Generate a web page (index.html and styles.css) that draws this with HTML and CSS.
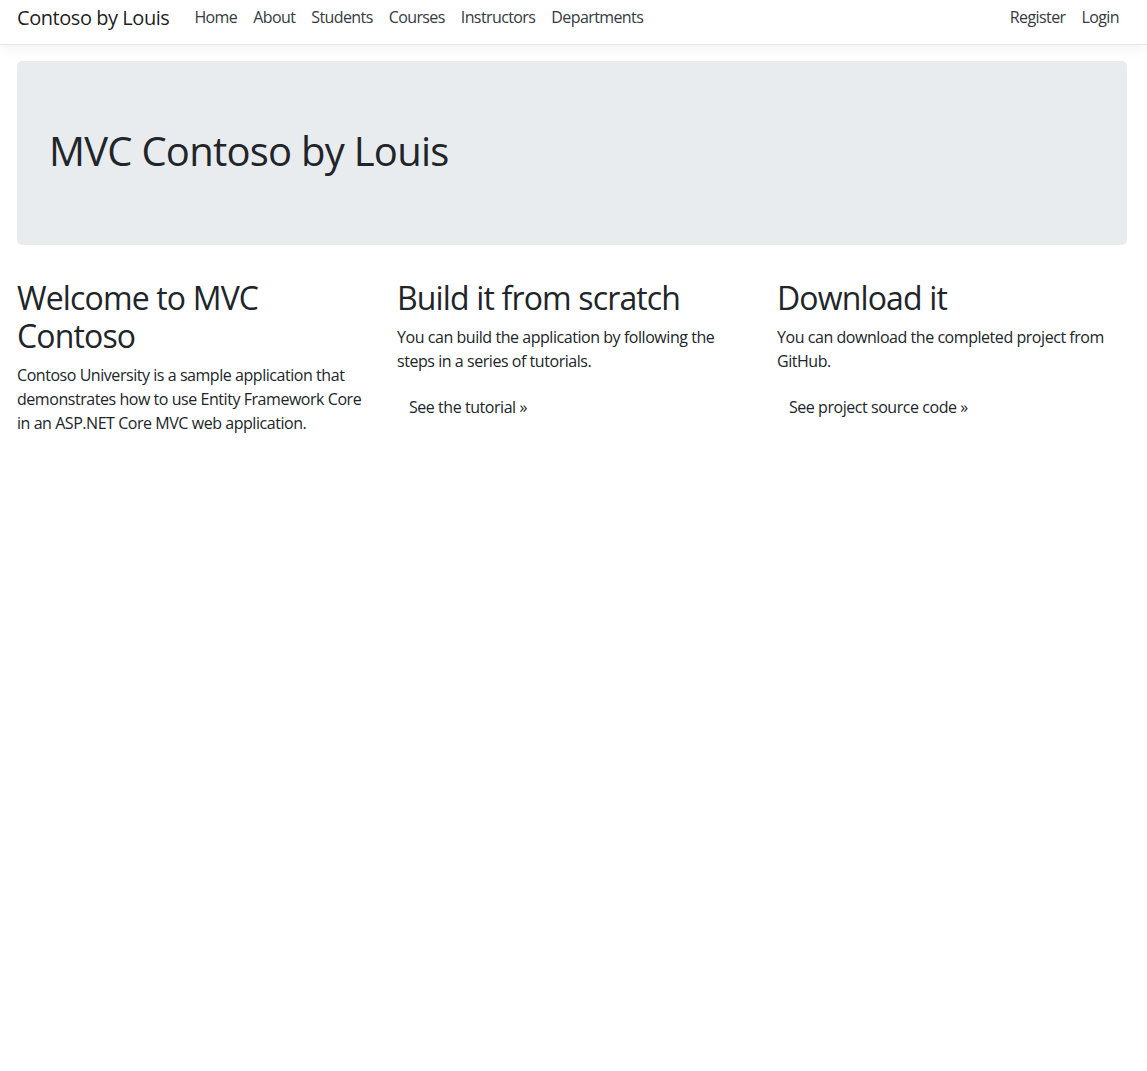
FILE: index.html
```html
<!DOCTYPE html>
<html lang="en">
<head>
<meta charset="utf-8">
<title>Home Page - Contoso by Louis</title>
<link rel="stylesheet" href="styles.css">
</head>
<body>
<header class="navbar">
  <a class="brand" href="#">Contoso by Louis</a>
  <nav class="nav-main">
    <a class="nav-link" href="#">Home</a>
    <a class="nav-link" href="#">About</a>
    <a class="nav-link" href="#">Students</a>
    <a class="nav-link" href="#">Courses</a>
    <a class="nav-link" href="#">Instructors</a>
    <a class="nav-link" href="#">Departments</a>
  </nav>
  <nav class="nav-user">
    <a class="nav-link" href="#">Register</a>
    <a class="nav-link" href="#">Login</a>
  </nav>
</header>
<main class="container">
  <div class="jumbotron">
    <h1>MVC Contoso by Louis</h1>
  </div>
  <div class="row">
    <div class="col">
      <h2>Welcome to MVC Contoso</h2>
      <p>Contoso University is a sample application that demonstrates how to use Entity Framework Core in an ASP.NET Core MVC web application.</p>
    </div>
    <div class="col">
      <h2>Build it from scratch</h2>
      <p>You can build the application by following the steps in a series of tutorials.</p>
      <p><a class="btn" href="#">See the tutorial &raquo;</a></p>
    </div>
    <div class="col">
      <h2>Download it</h2>
      <p>You can download the completed project from GitHub.</p>
      <p><a class="btn" href="#">See project source code &raquo;</a></p>
    </div>
  </div>
</main>
</body>
</html>
```
FILE: styles.css
```css
* { box-sizing: border-box; }
html, body { margin: 0; padding: 0; }
body {
  font-family: "Open Sans", "Noto Sans", sans-serif;
  font-size: 16px;
  line-height: 24px;
  letter-spacing: -0.45px;
  color: #212529;
  background: #fff;
}
a { text-decoration: none; }
.navbar {
  display: flex;
  align-items: flex-start;
  height: 45px;
  padding: 5px 20px 0 17px;
  border-bottom: 1px solid #e5e5e5;
  box-shadow: 0 4px 12px rgba(0,0,0,.05);
  background: #fff;
}
.brand {
  font-size: 20px;
  line-height: 26px;
  letter-spacing: -0.45px;
  color: rgba(0,0,0,.9);
  margin-right: 17px;
}
.nav-main, .nav-user { display: flex; }
.nav-user { margin-left: auto; }
.nav-link {
  color: #343a40;
  padding: 0 8px;
  line-height: 24px;
  letter-spacing: -0.6px;
}
.container {
  padding: 16px 20px 0 17px;
}
.jumbotron {
  background: #e9ecef;
  border-radius: 5px;
  padding: 66px 32px 62px;
  margin-bottom: 34px;
}
h1 {
  font-size: 40px;
  font-weight: 400;
  line-height: 48px;
  letter-spacing: -0.75px;
  margin: 0 0 8px;
}
.row {
  display: grid;
  grid-template-columns: repeat(3, 1fr);
  column-gap: 30px;
}
h2 {
  font-size: 32px;
  font-weight: 400;
  line-height: 38px;
  letter-spacing: -0.85px;
  margin: 0 0 8px;
}
p { margin: 0 0 16px; }
.btn {
  display: inline-block;
  padding: 6px 12px;
  color: #212529;
  line-height: 24px;
}
```
